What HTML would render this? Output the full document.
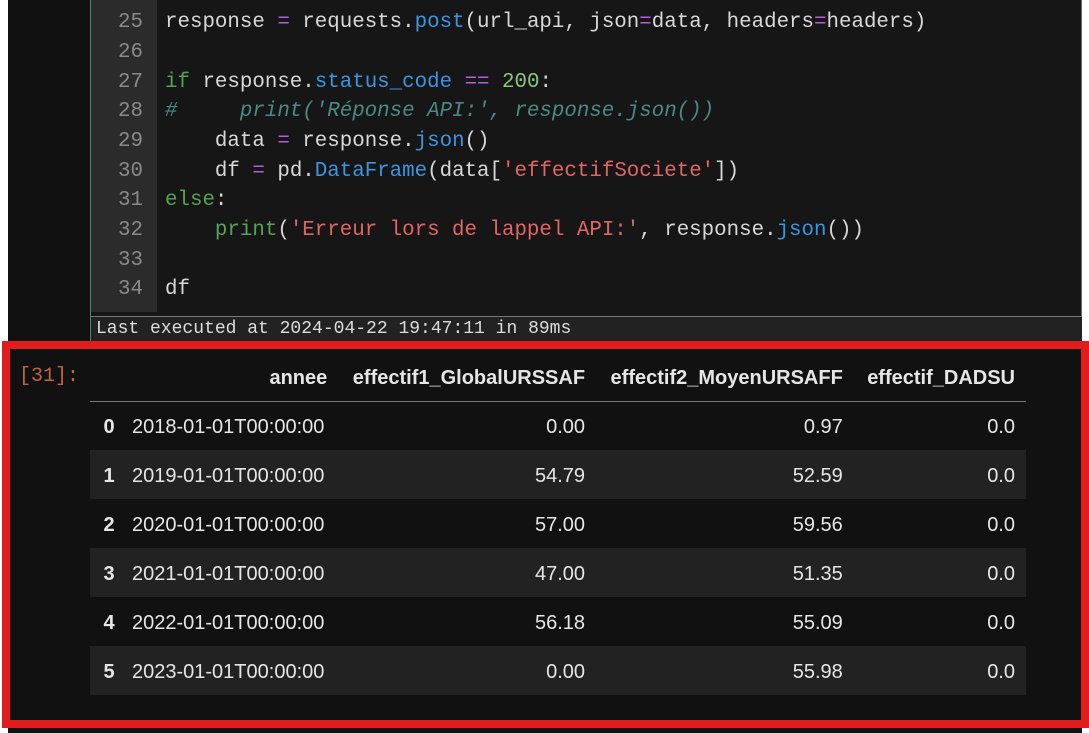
<!DOCTYPE html>
<html><head><style>
*{margin:0;padding:0;box-sizing:border-box}
body{width:1089px;height:733px;background:#fff;position:relative;overflow:hidden;font-family:"Liberation Sans",sans-serif}
#dark{position:absolute;left:8px;top:0;width:1074px;height:733px;background:#111111}
#ed{position:absolute;left:90px;top:0;width:992px;height:317px;background:#161616;border-left:1px solid #3a8f6a;border-right:1px solid #6a6a6a;border-bottom:1px solid #777}
#gut{position:absolute;left:91px;top:0;width:66px;height:312px;background:#2b2b2b}
.ln{position:absolute;left:91px;width:52px;text-align:right;color:#8a8a8a;font:20.8px/30px "Liberation Mono",monospace}
.cd{position:absolute;left:165px;color:#d8d8d8;font:20.8px/30px "Liberation Mono",monospace;white-space:pre}
.k{color:#4ea64e}.o{color:#b45fe0}.a{color:#3d94e0}.s{color:#e06666}.n{color:#8bc77a}.c{color:#4a8a85;font-style:italic}.f{color:#5aa05a}
#st{position:absolute;left:90px;top:317px;width:992px;height:24px;background:#222;border-left:1px solid #3a8f6a;color:#ddd;font:18px/25px "Liberation Mono",monospace;padding-left:5px;white-space:pre}
#red{position:absolute;left:2px;top:341px;width:1087px;height:387px;border:8px solid #e21c1c;background:#111}
#pr{position:absolute;left:19px;top:365px;color:#c0643c;font:20px/24px "Liberation Mono",monospace}
table{position:absolute;left:90px;top:357px;width:936px;border-collapse:collapse;color:#e6e6e6;font-size:20px}
th{font-weight:bold;text-align:right;height:44px;padding:0 11px;border-bottom:1px solid #777}
td{text-align:right;height:49px;padding:4px 11px 0}
td.i{font-weight:bold;text-align:center;padding:4px 0 0 4px;width:34px}
td.d{text-align:left;padding-left:8px}
tr:nth-child(odd) td{background:#222}
</style></head><body>
<div id="dark"></div>
<div id="ed"></div><div id="gut"></div>
<div class="ln" style="top:8px">25</div><div class="ln" style="top:38px">26</div><div class="ln" style="top:68px">27</div><div class="ln" style="top:97px">28</div><div class="ln" style="top:127px">29</div><div class="ln" style="top:157px">30</div><div class="ln" style="top:186px">31</div><div class="ln" style="top:216px">32</div><div class="ln" style="top:246px">33</div><div class="ln" style="top:275px">34</div>
<div class="cd" style="top:8px">response <span class="o">=</span> requests.<span class="a">post</span>(url_api, json<span class="o">=</span>data, headers<span class="o">=</span>headers)</div>
<div class="cd" style="top:68px"><span class="k">if</span> response.<span class="a">status_code</span> <span class="o">==</span> <span class="n">200</span>:</div>
<div class="cd" style="top:97px"><span class="c">#     print('Réponse API:', response.json())</span></div>
<div class="cd" style="top:127px">    data <span class="o">=</span> response.<span class="a">json</span>()</div>
<div class="cd" style="top:157px">    df <span class="o">=</span> pd.<span class="a">DataFrame</span>(data[<span class="s">'effectifSociete'</span>])</div>
<div class="cd" style="top:186px"><span class="k">else</span>:</div>
<div class="cd" style="top:216px">    <span class="f">print</span>(<span class="s">'Erreur lors de lappel API:'</span>, response.<span class="a">json</span>())</div>
<div class="cd" style="top:275px">df</div>
<div id="st">Last executed at 2024-04-22 19:47:11 in 89ms</div>
<div id="red"></div>
<div id="pr">[31]:</div>
<table>
<tr><th></th><th>annee</th><th>effectif1_GlobalURSSAF</th><th>effectif2_MoyenURSAFF</th><th>effectif_DADSU</th></tr>
<tr><td class="i">0</td><td class="d">2018-01-01T00:00:00</td><td>0.00</td><td>0.97</td><td>0.0</td></tr>
<tr><td class="i">1</td><td class="d">2019-01-01T00:00:00</td><td>54.79</td><td>52.59</td><td>0.0</td></tr>
<tr><td class="i">2</td><td class="d">2020-01-01T00:00:00</td><td>57.00</td><td>59.56</td><td>0.0</td></tr>
<tr><td class="i">3</td><td class="d">2021-01-01T00:00:00</td><td>47.00</td><td>51.35</td><td>0.0</td></tr>
<tr><td class="i">4</td><td class="d">2022-01-01T00:00:00</td><td>56.18</td><td>55.09</td><td>0.0</td></tr>
<tr><td class="i">5</td><td class="d">2023-01-01T00:00:00</td><td>0.00</td><td>55.98</td><td>0.0</td></tr>
</table>
</body></html>
